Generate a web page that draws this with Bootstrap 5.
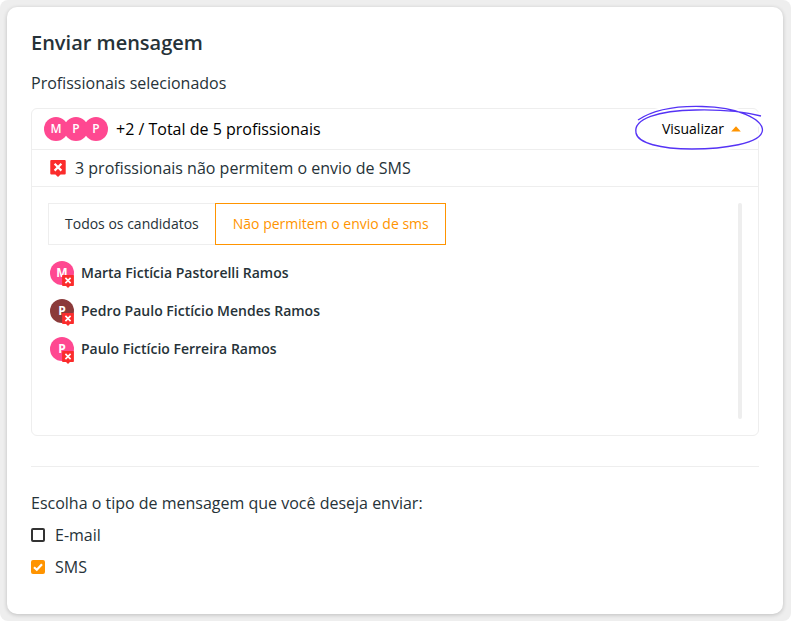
<!DOCTYPE html>
<html lang="pt-BR">
<head>
<meta charset="utf-8">
<meta name="viewport" content="width=device-width, initial-scale=1">
<title>Enviar mensagem</title>
<link href="https://cdn.jsdelivr.net/npm/bootstrap@5.3.0/dist/css/bootstrap.min.css" rel="stylesheet">
<style>
  :root { --line: #eee; --orange: #ff9400; --ink: #263238; --pink: #ff4891; }
  body { font-family: "Open Sans", sans-serif; font-size: 16px; line-height: 24px; color: var(--ink); background: #fff; }
  .backdrop { background: #eee; border-radius: 8px; padding: 7px 8px 7px 7px; min-height: 100vh; }
  .sheet { border: 0; border-radius: 10px; padding: 24px; box-shadow: 0 1px 4px rgba(0,0,0,.2); color: var(--ink); }
  .title { font-size: 20px; line-height: 24px; font-weight: 600; margin-bottom: 16px; }
  .panel { border: 1px solid var(--line); border-radius: 6px; margin-top: 13px; }
  .summary { height: 41px; padding: 0 12px; border-bottom: 1px solid var(--line); color: #000; }
  .notice { height: 37px; padding: 0 18px; border-bottom: 1px solid var(--line); gap: 9px; }
  .face { width: 24px; height: 24px; border-radius: 50%; background: var(--pink); color: #fff; font-size: 12px; line-height: 24px; font-weight: 600; text-align: center; flex: none; }
  .face.brown { background: #8b3a3a; }
  .stack .face + .face { margin-left: -4px; }
  .toggle { border: 0; background: none; padding: 0 5px; font-size: 14px; line-height: 20px; color: #000; gap: 7px; }
  .toggle > span, .toggle .caret { position: relative; }
  .scribble { position: absolute; left: -25px; top: -16px; z-index: 0; pointer-events: none; }
  .body-area { padding: 16px; height: 248px; }
  .choice { border: 1px solid var(--line); background: #fff; height: 42px; padding: 0 16px; font-size: 14px; color: var(--ink); }
  .choice + .choice { border-color: var(--orange); color: var(--orange); padding-left: 17px; margin-left: -1px; }
  .people { margin: 16px 0 0; padding-left: 2px; gap: 14px; font-size: 14px; font-weight: 600; }
  .people li { height: 24px; gap: 7px; }
  .people .face { font-weight: 700; }
  .flag { position: absolute; left: 12px; top: 14px; }
  .track { width: 4px; border-radius: 2px; background: #eee; }
  .divider { border-top: 1px solid #eee; margin: 30px 0 24px; }
  .pick { gap: 10px; margin-top: 8px; }
  .pick input { appearance: none; width: 14px; height: 14px; margin: 0; border: 2px solid #333; border-radius: 2px; background: #fff; display: block; }
  .pick input:checked { background: var(--orange); border-color: var(--orange); }
  .pick svg { position: absolute; left: 0; top: 0; pointer-events: none; }
  .sheet-end { height: 11px; }
</style>
<script src="https://cdn.jsdelivr.net/npm/bootstrap@5.3.0/dist/js/bootstrap.bundle.min.js" defer></script>
</head>
<body>
<svg width="0" height="0" class="position-absolute" aria-hidden="true">
  <symbol id="blocked" viewBox="0 0 15 16.500">
    <path d="M1 0h13q1 0 1 1v12q0 1-1 1H10L7.500 16.500 5 14H1q-1 0-1-1V1q0-1 1-1z" fill="#fb2c2c"/>
    <path d="M4.200 3.700l6.600 6.600M10.800 3.700L4.200 10.300" stroke="#fff" stroke-width="2.100" fill="none"/>
  </symbol>
</svg>
<main class="backdrop d-flex flex-column">
  <form class="sheet card">
    <h1 class="title">Enviar mensagem</h1>
    <div>Profissionais selecionados</div>

    <section class="panel">
      <div class="summary d-flex align-items-center">
        <div class="stack d-flex me-2">
          <span class="face">M</span><span class="face">P</span><span class="face">P</span>
        </div>
        <span>+2 / Total de 5 profissionais</span>
        <button type="button" class="toggle d-flex align-items-center position-relative ms-auto" aria-expanded="true">
          <svg class="scribble" width="134" height="50" viewBox="632 103 134 50" fill="none" aria-hidden="true">
            <path d="M638 120C656 108 684 106 702 106.500C738 107 762 119 762.500 130C762 144 722 149 692 149C660 149 638 143 636 133C633 119 658 110.500 696 110C720 109.500 742 111 761 116" stroke="#fff" stroke-width="6"/>
            <path d="M638 120C656 108 684 106 702 106.500C738 107 762 119 762.500 130C762 144 722 149 692 149C660 149 638 143 636 133C633 119 658 110.500 696 110C720 109.500 742 111 761 116" stroke="#5533f5" stroke-width="1.300"/>
          </svg>
          <span>Visualizar</span>
          <svg class="caret" width="10" height="6" viewBox="0 0 10 6" aria-hidden="true"><path d="M5 .3L9.800 5.500H.2z" fill="#ff9400"/></svg>
        </button>
      </div>
      <div class="notice d-flex align-items-center">
        <svg width="16" height="17" aria-hidden="true"><use href="#blocked"/></svg>
        <span>3 profissionais não permitem o envio de SMS</span>
      </div>
      <div class="body-area d-flex justify-content-between">
        <div>
          <div class="d-flex">
            <button type="button" class="choice">Todos os candidatos</button>
            <button type="button" class="choice">Não permitem o envio de sms</button>
          </div>
          <ul class="people list-unstyled d-flex flex-column">
            <li class="d-flex align-items-center"><span class="face position-relative">M<svg class="flag" width="12" height="13" aria-hidden="true"><use href="#blocked"/></svg></span>Marta Fictícia Pastorelli Ramos</li>
            <li class="d-flex align-items-center"><span class="face brown position-relative">P<svg class="flag" width="12" height="13" aria-hidden="true"><use href="#blocked"/></svg></span>Pedro Paulo Fictício Mendes Ramos</li>
            <li class="d-flex align-items-center"><span class="face position-relative">P<svg class="flag" width="12" height="13" aria-hidden="true"><use href="#blocked"/></svg></span>Paulo Fictício Ferreira Ramos</li>
          </ul>
        </div>
        <div class="track"></div>
      </div>
    </section>

    <div class="divider"></div>

    <div>Escolha o tipo de mensagem que você deseja enviar:</div>
    <div class="pick d-flex align-items-center">
      <input type="checkbox" id="email">
      <label for="email">E-mail</label>
    </div>
    <div class="pick d-flex align-items-center">
      <span class="position-relative">
        <input type="checkbox" id="sms" checked>
        <svg width="14" height="14" viewBox="0 0 14 14" aria-hidden="true"><path d="M3 7.200l2.800 2.600L11 4.200" fill="none" stroke="#fff" stroke-width="2.200"/></svg>
      </span>
      <label for="sms">SMS</label>
    </div>
    <div class="sheet-end"></div>
  </form>
</main>
</body>
</html>
